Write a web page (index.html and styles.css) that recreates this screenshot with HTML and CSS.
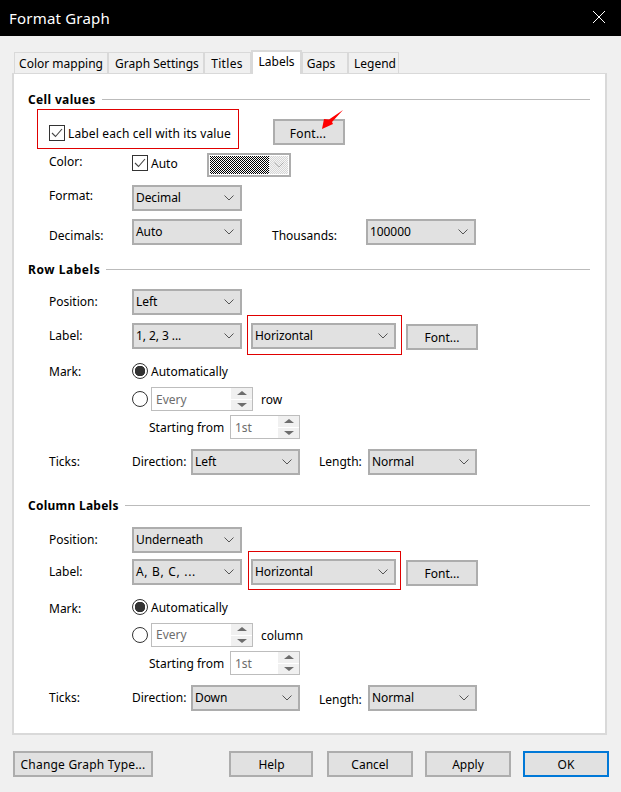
FILE: index.html
```html
<!DOCTYPE html>
<html lang="en">
<head>
<meta charset="utf-8">
<title>Format Graph</title>
<link rel="stylesheet" href="styles.css">
</head>
<body>
<svg class="defs" width="0" height="0" aria-hidden="true">
  <defs>
    <pattern id="ditherDark" width="2" height="2" patternUnits="userSpaceOnUse"><rect width="2" height="2" fill="#fff"/><rect width="1" height="1" fill="#000"/><rect x="1" y="1" width="1" height="1" fill="#000"/></pattern>
    <pattern id="ditherLight" width="2" height="2" patternUnits="userSpaceOnUse"><rect width="2" height="2" fill="#f6f6f6"/><rect width="1" height="1" fill="#d4d4d4"/><rect x="1" y="1" width="1" height="1" fill="#d4d4d4"/></pattern>
  </defs>
  <symbol id="chev" viewBox="0 0 10 6"><path d="M.5.5 5 5 9.500.5" fill="none" stroke="#555" stroke-width="1"/></symbol>
  <symbol id="tick" viewBox="0 0 12 10"><path d="M1 5 4.500 8.500 11 1" fill="none" stroke="#444" stroke-width="1.100"/></symbol>
</svg>
<div class="dialog">
  <header class="titlebar">
    <span class="title">Format Graph</span>
    <svg class="close" viewBox="0 0 12 12"><path d="M0 0 12 12M12 0 0 12" stroke="#fff" stroke-width="1" fill="none"/></svg>
  </header>
  <div class="tabs">
    <div class="tab w94">Color mapping</div>
    <div class="tab w96 t-graph">Graph Settings</div>
    <div class="tab w47 t-titles">Titles</div>
    <div class="tab active">Labels</div>
    <div class="tab w46 t-gaps">Gaps</div>
    <div class="tab w51 t-legend">Legend</div>
  </div>
  <main class="panel">
    <div class="heading"><span class="ls-cell">Cell values</span><i></i></div>
    <div class="row cell-row">
      <div class="redbox">
        <span class="check"><svg><use href="#tick"/></svg></span>
        <span class="check-label wide15">Label each cell with its value</span>
      </div>
      <div class="btn font-first"><span class="down1">Font...</span>
        <svg class="arrow" viewBox="0 0 24 24"><path d="M23 0 12 12 13 14 2 19 4 9 9 9.500Z" fill="#f00"/></svg>
      </div>
    </div>
    <div class="row h24 mt4">
      <span class="lab up4">Color:</span>
      <span class="check up2"><svg><use href="#tick"/></svg></span>
      <span class="check-label auto up2">Auto</span>
      <div class="colorbox">
        <svg class="dither"><rect width="100%" height="100%" fill="url(#ditherDark)"/></svg>
        <span class="drop">
          <svg class="drop-fill"><rect width="100%" height="100%" fill="url(#ditherLight)"/></svg>
          <svg class="chev"><use href="#chev"/></svg>
        </span>
      </div>
    </div>
    <div class="row mt8">
      <span class="lab up3">Format:</span>
      <div class="select w110"><span>Decimal</span><svg class="chev"><use href="#chev"/></svg></div>
    </div>
    <div class="row mt8">
      <span class="lab down3">Decimals:</span>
      <div class="select w110"><span>Auto</span><svg class="chev"><use href="#chev"/></svg></div>
      <span class="thousands">Thousands:</span>
      <div class="select w110"><span>100000</span><svg class="chev"><use href="#chev"/></svg></div>
    </div>

    <div class="heading mt16"><span class="ls-row">Row Labels</span><i></i></div>
    <div class="row mt12">
      <span class="lab up1">Position:</span>
      <div class="select w110"><span>Left</span><svg class="chev"><use href="#chev"/></svg></div>
    </div>
    <div class="row mt8">
      <span class="lab up1">Label:</span>
      <div class="select w110"><span>1, 2, 3 ...</span><svg class="chev"><use href="#chev"/></svg></div>
      <div class="select w145 hl-a"><span>Horizontal</span><svg class="chev"><use href="#chev"/></svg></div>
      <div class="btn side-font">Font...</div>
    </div>
    <div class="row h16 mt14">
      <span class="lab">Mark:</span>
      <span class="radio on"></span>
      <span class="check-label">Automatically</span>
    </div>
    <div class="row h24 mt8 indent">
      <span class="radio"></span>
      <div class="spin w102"><span>Every</span><div class="arrows"><b class="up"></b><b class="down"></b></div></div>
      <span class="unit">row</span>
    </div>
    <div class="row h24 mt4 indent2">
      <span class="starting">Starting from</span>
      <div class="spin w70"><span>1st</span><div class="arrows"><b class="up"></b><b class="down"></b></div></div>
    </div>
    <div class="row mt10">
      <span class="lab up1">Ticks:</span>
      <span class="dir up1">Direction:</span>
      <div class="select w109"><span>Left</span><svg class="chev"><use href="#chev"/></svg></div>
      <span class="len up1">Length:</span>
      <div class="select w109"><span>Normal</span><svg class="chev"><use href="#chev"/></svg></div>
    </div>

    <div class="heading mt22"><span class="ls-col">Column Labels</span><i></i></div>
    <div class="row mt14">
      <span class="lab up1">Position:</span>
      <div class="select w110"><span>Underneath</span><svg class="chev"><use href="#chev"/></svg></div>
    </div>
    <div class="row mt6">
      <span class="lab up1">Label:</span>
      <div class="select w110"><span class="ls-abc">A, B, C, ...</span><svg class="chev"><use href="#chev"/></svg></div>
      <div class="select w145 hl-b"><span>Horizontal</span><svg class="chev"><use href="#chev"/></svg></div>
      <div class="btn side-font">Font...</div>
    </div>
    <div class="row h16 mt14">
      <span class="lab down1">Mark:</span>
      <span class="radio on"></span>
      <span class="check-label">Automatically</span>
    </div>
    <div class="row h24 mt8 indent">
      <span class="radio"></span>
      <div class="spin w102"><span class="up1">Every</span><div class="arrows"><b class="up"></b><b class="down"></b></div></div>
      <span class="unit">column</span>
    </div>
    <div class="row h24 mt4 indent2">
      <span class="starting">Starting from</span>
      <div class="spin w70"><span>1st</span><div class="arrows"><b class="up"></b><b class="down"></b></div></div>
    </div>
    <div class="row mt10">
      <span class="lab up1">Ticks:</span>
      <span class="dir up1">Direction:</span>
      <div class="select w109"><span>Down</span><svg class="chev"><use href="#chev"/></svg></div>
      <span class="len down1">Length:</span>
      <div class="select w109"><span>Normal</span><svg class="chev"><use href="#chev"/></svg></div>
    </div>
  </main>
  <footer class="footer">
    <div class="btn change">Change Graph Type...</div>
    <div class="btn action help">Help</div>
    <div class="btn action">Cancel</div>
    <div class="btn action">Apply</div>
    <div class="btn action ok">OK</div>
  </footer>
</div>
</body>
</html>
```
FILE: styles.css
```css
* { box-sizing: border-box; }
html, body { margin: 0; padding: 0; }
body { width: 621px; height: 792px; overflow: hidden; background: #f0f0f0; font: 12px "Noto Sans", "DejaVu Sans", sans-serif; color: #000; }
.defs { position: absolute; }
.dialog { width: 621px; height: 792px; }
.titlebar { height: 36px; background: #000; color: #fff; display: flex; align-items: center; justify-content: space-between; padding: 0 16px 0 9px; }
.title { font-size: 15px; letter-spacing: .2px; }
.close { width: 12px; height: 12px; margin-bottom: 2px; }

.tabs { display: flex; align-items: flex-end; height: 37px; padding-left: 14px; }
.tab { height: 21px; background: #f0f0f0; border: 2px solid #d9d9d9; border-width: 1px 1px 0 1px; display: flex; align-items: center; justify-content: center; }
.tab.active { width: 51px; height: 24px; background: #fff; border-width: 2px 2px 0; padding-bottom: 4px; position: relative; margin-bottom: -1px; z-index: 1; }
.w94 { width: 94px; } .w96 { width: 96px; } .w47 { width: 47px; } .w46 { width: 46px; } .w51 { width: 51px; }
.t-graph { padding-left: 2px; }
.t-titles { letter-spacing: .3px; padding-right: 1px; }
.t-gaps { padding-right: 8px; }
.t-legend { padding-left: 3px; }

.panel { margin-left: 12px; width: 595px; height: 662px; background: #fff; border: 2px solid #d9d9d9; border-width: 1px 2px 2px 2px; padding: 17px 15px 0 14px; }
.heading { display: flex; align-items: center; height: 16px; font-weight: 700; gap: 6px; }
.heading i { flex: 1; height: 1px; background: #a0a0a0; border-bottom: 1px solid #bbb; }
.ls-cell { letter-spacing: .35px; }
.ls-row { letter-spacing: .55px; }
.ls-col { letter-spacing: .25px; }
.ls-abc { letter-spacing: .7px; }
.wide15 { letter-spacing: .14px; }

.row { display: flex; align-items: center; height: 26px; padding-left: 21px; }
.cell-row { height: 40px; margin-top: 2px; padding-left: 9px; align-items: flex-start; }
.h24 { height: 24px; } .h16 { height: 16px; }
.mt4 { margin-top: 4px; } .mt6 { margin-top: 6px; } .mt8 { margin-top: 8px; } .mt10 { margin-top: 10px; }
.mt12 { margin-top: 12px; } .mt14 { margin-top: 14px; } .mt16 { margin-top: 16px; } .mt22 { margin-top: 22px; }

.redbox { width: 202px; height: 40px; border: 1px solid #e00000; display: flex; align-items: center; padding: 8px 0 0 11px; }
.check { width: 16px; height: 16px; flex: none; border: 1px solid #333; background: #fff; display: flex; align-items: center; justify-content: center; }
.check svg { width: 12px; height: 10px; }
.check-label { margin-left: 3px; white-space: nowrap; }
.check-label.auto { width: 53px; }

.lab { width: 83px; flex: none; }
.up1 { position: relative; top: -1px; } .up2 { position: relative; top: -2px; } .up3 { position: relative; top: -3px; } .up4 { position: relative; top: -4px; }
.down1 { position: relative; top: 1px; } .down3 { position: relative; top: 3px; }

.select { height: 26px; flex: none; background: #e1e1e1; border: 2px solid #adadad; display: flex; align-items: center; justify-content: space-between; padding: 0 6px 0 2px; white-space: nowrap; letter-spacing: -.08px; }
.select span { position: relative; top: -1px; }
.w110 { width: 110px; } .w109 { width: 109px; } .w145 { width: 145px; }
.chev { width: 10px; height: 6px; flex: none; }
.thousands { width: 94px; margin-left: 30px; position: relative; top: 3px; }

.hl-a, .hl-b { position: relative; margin-left: 9px; }
.hl-a::after, .hl-b::after { content: ""; position: absolute; border: 1px solid #e00000; }
.hl-a::after { left: -6px; right: -8px; top: -10px; bottom: -8px; }
.hl-b::after { left: -5px; right: -7px; top: -10px; bottom: -7px; }

.colorbox { width: 84px; height: 24px; border: 2px solid #adadad; background: #fff; display: flex; padding: 1px; margin-left: 3px; }
.dither { width: 59px; height: 18px; flex: none; shape-rendering: crispEdges; }
.drop { flex: 1; display: flex; align-items: center; justify-content: center; position: relative; }
.drop-fill { position: absolute; inset: 0; width: 100%; height: 100%; shape-rendering: crispEdges; }
.drop .chev { opacity: .35; position: relative; }

.btn { height: 26px; background: #e1e1e1; border: 2px solid #adadad; display: flex; align-items: center; justify-content: center; white-space: nowrap; flex: none; }
.font-first { width: 72px; margin: 10px 0 0 34px; position: relative; padding-right: 2px; letter-spacing: .2px; }
.arrow { position: absolute; width: 24px; height: 24px; left: 45px; top: -11px; }
.side-font { width: 72px; margin-left: 10px; position: relative; top: 1px; }

.radio { width: 16px; height: 16px; flex: none; border-radius: 50%; border: 1px solid #333; background: #fff; }
.radio.on { background: radial-gradient(circle, #333 0 5px, #fff 5.500px); }
.indent { padding-left: 104px; }
.indent2 { padding-left: 121px; }
.spin { height: 24px; flex: none; border: 1px solid #bdbdbd; background: #fff; color: #6d6d6d; display: flex; align-items: center; justify-content: space-between; padding-left: 4px; }
.w102 { width: 102px; margin-left: 3px; } .w70 { width: 70px; }
.arrows { width: 21px; height: 22px; display: flex; flex-direction: column; background: #f0f0f0; }
.arrows b { flex: 1; display: flex; align-items: center; justify-content: center; }
.arrows b::before { content: ""; border: 5px solid transparent; border-top: 0; border-bottom: 4px solid #6d6d6d; }
.arrows .down { border-top: 1px solid #fff; }
.arrows .down::before { border-bottom: 0; border-top: 4px solid #6d6d6d; }
.unit { margin-left: 8px; }
.starting { width: 81px; flex: none; }
.dir { width: 59px; flex: none; }
.len { width: 49px; margin-left: 19px; flex: none; }

.footer { display: flex; padding: 16px 0 0 13px; }
.change { width: 140px; letter-spacing: .2px; }
.action { width: 86px; margin-left: 12px; }
.help { width: 84px; margin-left: 76px; margin-right: 2px; padding-left: 1px; }
.ok { border-color: #0078d7; background: #e1e1e1; }
```
